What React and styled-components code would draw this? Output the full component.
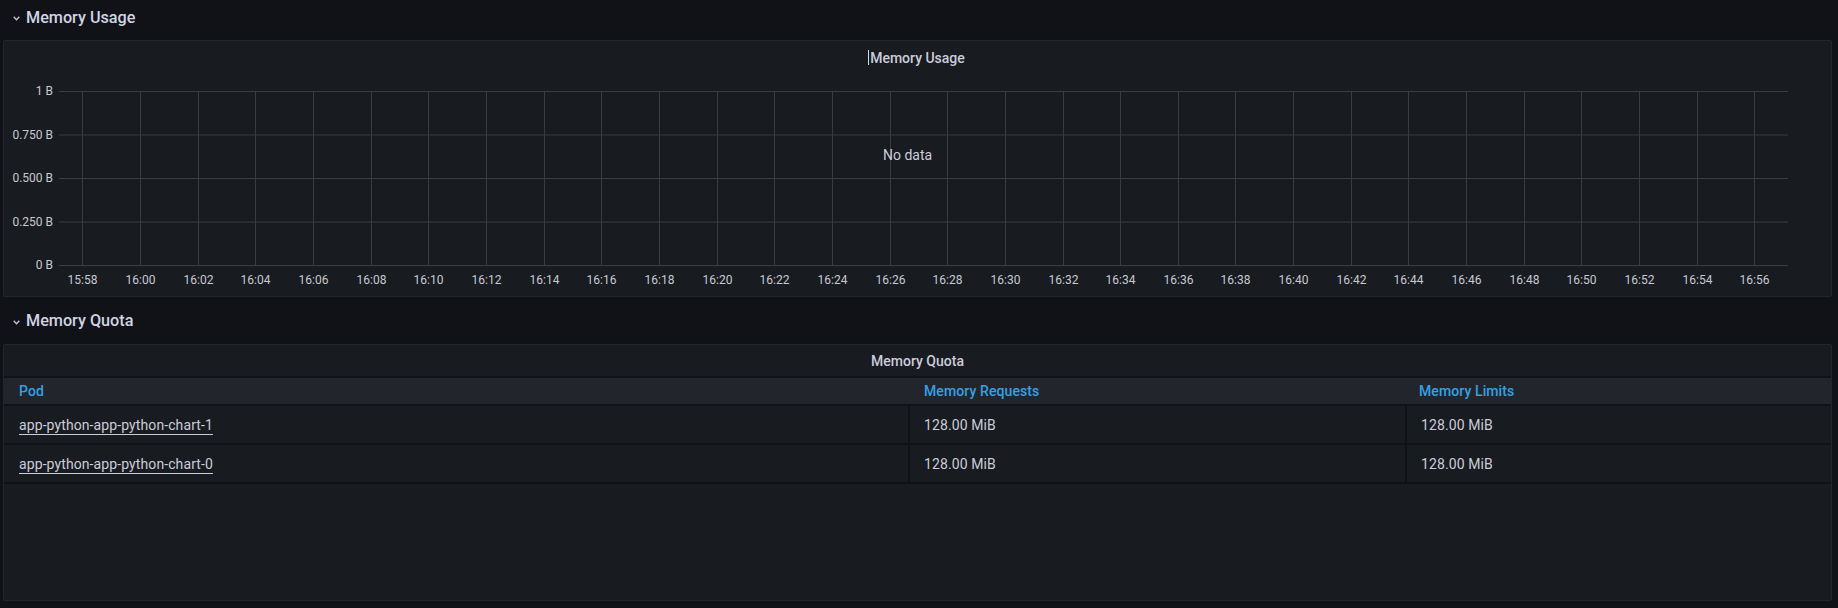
import React from "react";
import styled, { createGlobalStyle } from "styled-components";

const Global = createGlobalStyle`
  html, body { margin: 0; padding: 0; background: #111217; }
  body { font-family: Roboto, "Noto Sans", "Liberation Sans", sans-serif; color: #ccccdc; }
`;

const Page = styled.div`
  width: 1838px;
  height: 608px;
  background: #111217;
  display: flex;
  flex-direction: column;
  overflow: hidden;
`;

const RowHeader = styled.div`
  height: ${(p) => p.$h}px;
  margin-top: ${(p) => p.$mt || 0}px;
  display: flex;
  align-items: center;
  padding: 0 0 6px 13px;
  box-sizing: border-box;
  gap: 6px;
  flex-shrink: 0;
`;

const RowTitle = styled.span`
  font-size: 16.2px;
  font-weight: 500;
  color: #d0d4e4;
`;

const Chevron = () => (
  <svg width="7" height="5" viewBox="0 0 7 5" style={{ marginTop: 3 }}>
    <path d="M0.7 0.8 L3.5 3.8 L6.3 0.8" fill="none" stroke="#c4c6d0" strokeWidth="1.3" />
  </svg>
);

const Panel = styled.div`
  margin-left: 3px;
  width: 1829px;
  height: 257px;
  box-sizing: border-box;
  background: #181b1f;
  border: 1px solid #232529;
  border-radius: 2px;
  display: flex;
  flex-direction: column;
  flex-shrink: 0;
  position: relative;
`;

const PanelTitle = styled.div`
  height: ${(p) => p.$h}px;
  padding-bottom: ${(p) => p.$pb || 0}px;
  box-sizing: border-box;
  display: flex;
  align-items: center;
  justify-content: center;
  font-size: 14px;
  font-weight: 500;
  color: #ccccdc;
  flex-shrink: 0;
`;

const TitleText = styled.span`
  position: relative;
  ${(p) =>
    p.$cursor &&
    `&::before {
      content: "";
      position: absolute;
      left: -2px;
      top: 0px;
      width: 1px;
      height: 15px;
      background: #d8d9e0;
    }`}
`;

const ChartArea = styled.div`
  position: relative;
  flex: 1;
`;

const NoData = styled.div`
  position: absolute;
  left: 879px;
  top: 70px;
  font-size: 14px;
  color: #ccccdc;
`;

const times = [];
for (let i = 0; i < 30; i++) {
  const total = 15 * 60 + 58 + i * 2;
  const h = Math.floor(total / 60);
  const m = total % 60;
  times.push(`${h}:${String(m).padStart(2, "0")}`);
}
const yTicks = [
  { label: "1 B", y: 14 },
  { label: "0.750 B", y: 57.5 },
  { label: "0.500 B", y: 101 },
  { label: "0.250 B", y: 144.5 },
  { label: "0 B", y: 188 },
];

const Chart = () => (
  <svg width="1827" height="219" style={{ display: "block" }}>
    {yTicks.map((t) => (
      <g key={t.label}>
        <line x1="55" x2="1784" y1={t.y + 0.5} y2={t.y + 0.5} stroke="#3a3c42" strokeWidth="1" />
        <text
          x="49"
          y={t.y + 4}
          textAnchor="end"
          fontSize="12"
          fill="#c8c9d3"
          fontFamily="Roboto, sans-serif"
        >
          {t.label}
        </text>
      </g>
    ))}
    {times.map((t, i) => {
      const x = Math.round(78.3 + i * 57.66) + 0.5;
      return (
        <g key={t}>
          <line x1={x} x2={x} y1="14" y2="188" stroke="#3a3c42" strokeWidth="1" />
          <text
            x={x}
            y="207"
            textAnchor="middle"
            fontSize="12"
            fill="#c8c9d3"
            fontFamily="Roboto, sans-serif"
          >
            {t}
          </text>
        </g>
      );
    })}
  </svg>
);

const Table = styled.div`
  display: flex;
  flex-direction: column;
  gap: 2px;
  background: #111217;
  padding-bottom: 2px;
`;

const Row = styled.div`
  display: grid;
  grid-template-columns: 904px 495px 1fr;
  column-gap: ${(p) => (p.$head ? 0 : 2)}px;
  height: ${(p) => (p.$head ? 26 : 37)}px;
  background: ${(p) => (p.$head ? "#22252b" : "#111217")};
`;

const Cell = styled.div`
  display: flex;
  align-items: center;
  padding-left: ${(p) => (p.$first ? 15 : p.$head ? 16 : 14)}px;
  background: ${(p) => (p.$head ? "#22252b" : "#181b1f")};
  font-size: 14px;
  letter-spacing: 0.1px;
  font-weight: ${(p) => (p.$head ? 500 : 400)};
  color: ${(p) => (p.$head ? "#33a2e5" : "#ccccdc")};
  white-space: nowrap;
`;

const PodLink = styled.span`
  text-decoration: underline;
  text-underline-offset: 4px;
  text-decoration-thickness: 1px;
  color: #ccccdc;
`;

const TopLine = styled.div`
  height: 2px;
  background: #111217;
`;

const Fill = styled.div`
  flex: 1;
`;

const rows = [
  ["app-python-app-python-chart-1", "128.00 MiB", "128.00 MiB"],
  ["app-python-app-python-chart-0", "128.00 MiB", "128.00 MiB"],
];

export default function App() {
  return (
    <Page>
      <Global />
      <RowHeader $h={40}>
        <Chevron />
        <RowTitle>Memory Usage</RowTitle>
      </RowHeader>
      <Panel>
        <PanelTitle $h={36} $pb={3}>
          <TitleText $cursor>Memory Usage</TitleText>
        </PanelTitle>
        <ChartArea>
          <Chart />
          <NoData>No data</NoData>
        </ChartArea>
      </Panel>
      <RowHeader $h={41} $mt={6}>
        <Chevron />
        <RowTitle>Memory Quota</RowTitle>
      </RowHeader>
      <Panel>
        <PanelTitle $h={31}>
          <TitleText>Memory Quota</TitleText>
        </PanelTitle>
        <TopLine />
        <Table>
          <Row $head>
            <Cell $head $first>Pod</Cell>
            <Cell $head>Memory Requests</Cell>
            <Cell $head>Memory Limits</Cell>
          </Row>
          {rows.map((r) => (
            <Row key={r[0]}>
              <Cell $first>
                <PodLink>{r[0]}</PodLink>
              </Cell>
              <Cell>{r[1]}</Cell>
              <Cell>{r[2]}</Cell>
            </Row>
          ))}
        </Table>
        <Fill />
      </Panel>
    </Page>
  );
}
